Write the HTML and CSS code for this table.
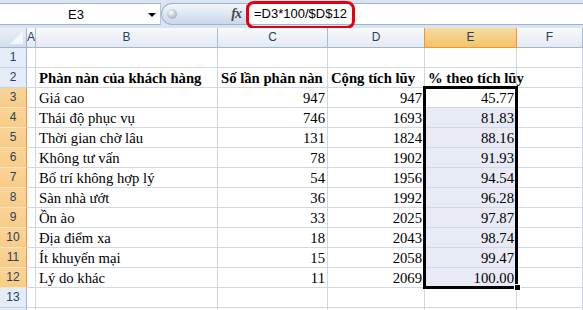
FILE: index.html
```html
<!DOCTYPE html>
<html lang="vi">
<head>
<meta charset="utf-8">
<title>Excel</title>
<link rel="stylesheet" href="styles.css">
</head>
<body>
<div class="app">
  <div class="fbar">
    <div class="namebox"><span class="ref">E3</span><span class="caret"></span></div>
    <div class="pill"><span class="orb"></span><span class="fx">fx</span></div>
    <div class="formula">=D3*100/$D$12</div>
    <div class="hl"></div>
  </div>
  <div class="sheet">
    <div class="corner"><span class="tri"></span></div>
    <div class="ch">A</div><div class="ch">B</div><div class="ch">C</div><div class="ch">D</div><div class="ch on">E</div><div class="ch">F</div>

    <div class="rh">1</div><div class="c"></div><div class="c"></div><div class="c"></div><div class="c"></div><div class="c"></div><div class="c"></div>

    <div class="rh">2</div><div class="c"></div><div class="c b">Phàn nàn của khách hàng</div><div class="c b">Số lần phàn nàn</div><div class="c b">Cộng tích lũy</div><div class="c b">% theo tích lũy</div><div class="c"></div>

    <div class="rh on">3</div><div class="c"></div><div class="c">Giá cao</div><div class="c num">947</div><div class="c num">947</div><div class="c num">45.77</div><div class="c"></div>
    <div class="rh on">4</div><div class="c"></div><div class="c">Thái độ phục vụ</div><div class="c num">746</div><div class="c num">1693</div><div class="c num fill">81.83</div><div class="c"></div>
    <div class="rh on">5</div><div class="c"></div><div class="c">Thời gian chờ lâu</div><div class="c num">131</div><div class="c num">1824</div><div class="c num fill">88.16</div><div class="c"></div>
    <div class="rh on">6</div><div class="c"></div><div class="c">Không tư vấn</div><div class="c num">78</div><div class="c num">1902</div><div class="c num fill">91.93</div><div class="c"></div>
    <div class="rh on">7</div><div class="c"></div><div class="c">Bố trí không hợp lý</div><div class="c num">54</div><div class="c num">1956</div><div class="c num fill">94.54</div><div class="c"></div>
    <div class="rh on">8</div><div class="c"></div><div class="c">Sàn nhà ướt</div><div class="c num">36</div><div class="c num">1992</div><div class="c num fill">96.28</div><div class="c"></div>
    <div class="rh on">9</div><div class="c"></div><div class="c">Ồn ào</div><div class="c num">33</div><div class="c num">2025</div><div class="c num fill">97.87</div><div class="c"></div>
    <div class="rh on">10</div><div class="c"></div><div class="c">Địa điểm xa</div><div class="c num">18</div><div class="c num">2043</div><div class="c num fill">98.74</div><div class="c"></div>
    <div class="rh on">11</div><div class="c"></div><div class="c">Ít khuyến mại</div><div class="c num">15</div><div class="c num">2058</div><div class="c num fill">99.47</div><div class="c"></div>
    <div class="rh on">12</div><div class="c"></div><div class="c">Lý do khác</div><div class="c num">11</div><div class="c num">2069</div><div class="c num fill">100.00</div><div class="c"></div>

    <div class="rh">13</div><div class="c"></div><div class="c"></div><div class="c"></div><div class="c"></div><div class="c"></div><div class="c"></div>
    <div class="rh"></div><div class="c"></div><div class="c"></div><div class="c"></div><div class="c"></div><div class="c"></div><div class="c"></div>

    <div class="sel"></div>
    <div class="handle"></div>
  </div>
</div>
</body>
</html>
```

FILE: styles.css
```css
html, body {
  margin: 0;
  padding: 0;
  background: #ffffff;
}
body {
  width: 583px;
  height: 310px;
  overflow: hidden;
}
.app {
  width: 583px;
  height: 310px;
  overflow: hidden;
}

/* formula bar */
.fbar {
  position: relative;
  height: 28px;
  box-sizing: border-box;
  padding: 3px 0 3px 0;
  background: #dbe5f2;
  display: flex;
}
.namebox {
  width: 161px;
  height: 22px;
  box-sizing: border-box;
  background: #ffffff;
  border-top: 1px solid #9fb3cd;
  border-bottom: 1px solid #9fb3cd;
  border-right: 1px solid #b6c6da;
  display: flex;
  align-items: center;
}
.ref {
  flex: 1;
  text-align: center;
  font-family: "Liberation Sans", Arial, sans-serif;
  font-size: 13px;
  color: #000;
  padding-left: 4px;
}
.caret {
  width: 0;
  height: 0;
  border-left: 4px solid transparent;
  border-right: 4px solid transparent;
  border-top: 4px solid #000;
  margin-right: 4px;
  margin-top: 2px;
}
.pill {
  width: 85px;
  height: 22px;
  box-sizing: border-box;
  border: 1px solid #9fb3cd;
  border-right: none;
  border-radius: 11px 0 0 11px;
  background: linear-gradient(#f3f7fc, #dbe5f2 55%, #c9d7ea);
  display: flex;
  align-items: center;
  justify-content: space-between;
  padding: 0 5px 0 5px;
}
.orb {
  width: 10px;
  height: 10px;
  border-radius: 50%;
  background: radial-gradient(circle at 40% 35%, #ffffff, #c8ced6 45%, #8f99a6);
}
.fx {
  font-family: "Liberation Serif", serif;
  font-style: italic;
  font-weight: bold;
  font-size: 14px;
  color: #4a4a4a;
  letter-spacing: -1px;
}
.formula {
  flex: 1;
  height: 22px;
  box-sizing: border-box;
  background: #ffffff;
  border-top: 1px solid #9fb3cd;
  border-bottom: 1px solid #9fb3cd;
  border-left: 1px solid #b6c6da;
  font-family: "Liberation Sans", Arial, sans-serif;
  font-size: 13px;
  line-height: 20px;
  padding-left: 7px;
  color: #000;
}
.hl {
  position: absolute;
  left: 246px;
  top: 1px;
  width: 109px;
  height: 28px;
  box-sizing: border-box;
  border: 3px solid #e5000c;
  border-radius: 8px;
}

/* sheet */
.sheet {
  position: relative;
  display: grid;
  grid-template-columns: 27px 9px 182px 110px 97px 92px 66px;
  grid-auto-rows: 20px;
}
.corner {
  position: relative;
  box-sizing: border-box;
  background: linear-gradient(#e9eff7, #d4deeb);
  border-right: 1px solid #9eb6ce;
  border-bottom: 1px solid #9eb6ce;
}
.tri {
  position: absolute;
  right: 3px;
  bottom: 3px;
  width: 0;
  height: 0;
  border-left: 13px solid transparent;
  border-bottom: 13px solid #f4f7fb;
}
.ch {
  box-sizing: border-box;
  background: linear-gradient(#f8fafc, #e4eaf2);
  border-right: 1px solid #a9bdd4;
  border-bottom: 1px solid #9eb6ce;
  font-family: "Liberation Sans", Arial, sans-serif;
  font-size: 12px;
  line-height: 19px;
  text-align: center;
  color: #27415f;
  overflow: hidden;
}
.ch.on {
  background: linear-gradient(#f9dba4, #f2c467);
  border-right: 1px solid #f29536;
  border-left: 1px solid #f29536;
  border-bottom: 1px solid #f29536;
  margin-left: -1px;
}
.rh {
  box-sizing: border-box;
  background: #e4ecf7;
  border-right: 1px solid #9eb6ce;
  border-bottom: 1px solid #c5d3e5;
  font-family: "Liberation Sans", Arial, sans-serif;
  font-size: 12px;
  line-height: 19px;
  text-align: center;
  color: #27415f;
}
.rh.on {
  background: linear-gradient(#fad498, #f8cc86);
  border-right: 1px solid #f29536;
  border-bottom: 1px solid #fde6bf;
}
.c {
  box-sizing: border-box;
  border-right: 1px solid #d0d7e5;
  border-bottom: 1px solid #d0d7e5;
  font-family: "Liberation Serif", "Times New Roman", serif;
  font-size: 14.7px;
  line-height: 19px;
  padding: 1px 2px 0 3px;
  white-space: nowrap;
  color: #000;
}
.b {
  font-weight: bold;
  overflow: visible;
}
.num {
  text-align: right;
  padding-right: 2px;
}
.fill {
  background: #e8ebf5;
}
.sel {
  position: absolute;
  left: 423px;
  top: 58px;
  width: 95px;
  height: 203px;
  box-sizing: border-box;
  border: 3px solid #000;
}
.handle {
  position: absolute;
  left: 514px;
  top: 256px;
  width: 7px;
  height: 7px;
  box-sizing: border-box;
  background: #000;
  border: 1px solid #fff;
}
```
